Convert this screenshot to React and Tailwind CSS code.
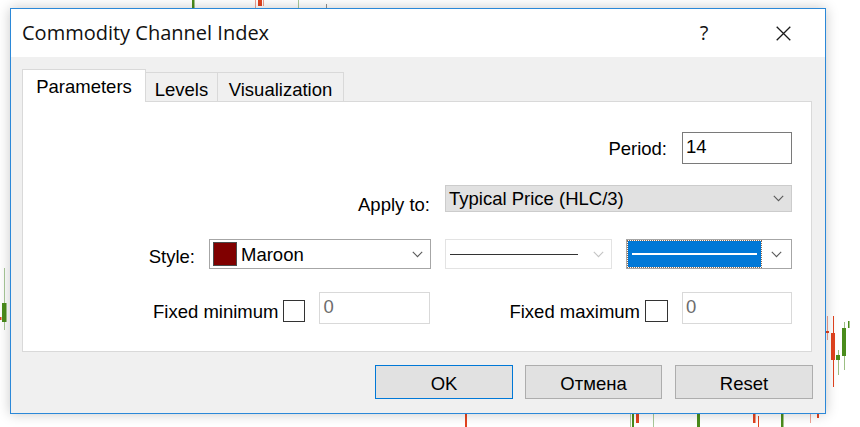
import React from "react";

function Chevron({ color = "#5a5a5a" }) {
  return (
    <svg width="11" height="7" viewBox="0 0 11 7">
      <path d="M0.8 0.8 L5.5 5.6 L10.2 0.8" fill="none" stroke={color} strokeWidth="1.1" />
    </svg>
  );
}

function Chart() {
  const red = "#e2431f";
  const green = "#4a8c1c";
  return (
    <svg className="absolute inset-0" width="860" height="427" viewBox="0 0 860 427">
      {/* top */}
      <rect x="192" y="0" width="2.5" height="9" fill={green} />
      <rect x="255" y="0" width="1" height="9" fill="#f0a090" />
      <rect x="258" y="0" width="4" height="6" fill={red} />
      <rect x="263" y="0" width="1" height="6" fill="#f0a090" />
      <rect x="298" y="0" width="1" height="8" fill="#a8c898" />
      <rect x="326" y="4" width="1" height="4" fill="#909090" />
      {/* left */}
      <rect x="4" y="268" width="1" height="62" fill="#a8c898" />
      <rect x="2" y="303" width="4.5" height="19" fill={green} />
      <rect x="0" y="317" width="1.5" height="3" fill={red} />
      {/* right */}
      <rect x="827" y="316" width="1" height="24" fill="#f0a090" />
      <rect x="826" y="331" width="3" height="2" fill={red} />
      <rect x="833" y="316" width="1" height="71" fill={red} />
      <rect x="831" y="333" width="4" height="27" fill={red} />
      <rect x="838" y="350" width="1" height="25" fill="#9cbf84" />
      <rect x="836" y="355" width="4" height="5" fill={green} />
      <rect x="844" y="322" width="1" height="48" fill="#9cbf84" />
      <rect x="842" y="328" width="4" height="28" fill={green} />
      <rect x="848" y="321" width="1.5" height="7" fill={green} />
      {/* bottom */}
      <rect x="465" y="414" width="2" height="13" fill={red} />
      <rect x="630" y="413" width="1" height="14" fill="#a8c898" />
      <rect x="632" y="413" width="2" height="14" fill={green} />
      <rect x="636" y="413" width="3" height="10" fill={red} />
      <rect x="653" y="413" width="1" height="14" fill="#a8c898" />
      <rect x="697" y="413" width="3" height="14" fill={green} />
      <rect x="753" y="413" width="2.5" height="10" fill={red} />
      <rect x="758" y="416" width="1" height="11" fill={red} />
      <rect x="781" y="413" width="2.5" height="14" fill={green} />
      <rect x="810" y="414" width="1" height="9" fill="#f0a090" />
      <rect x="817" y="414" width="2" height="4" fill={red} />
    </svg>
  );
}

export default function App() {
  return (
    <div className="relative w-[860px] h-[427px] bg-white overflow-hidden font-['Liberation_Sans',Arial,sans-serif] text-black text-[18.5px] leading-[21px]">
      <Chart />
      <div className="absolute left-[10px] top-[8px] w-[816px] h-[406px] border border-[#2b88d8] bg-[#f0f0f0] flex flex-col shadow-[0_0_12px_rgba(0,0,0,0.22)]">
        {/* title bar */}
        <div className="h-[48px] bg-white flex items-center pl-[11px] font-['Open_Sans',sans-serif] text-[20px] leading-[26px] text-[#111]">
          <span className="flex-1">Commodity Channel Index</span>
          <div className="w-[46px] flex justify-center">?</div>
          <div className="w-[33px]" />
          <div className="w-[46px] flex justify-center">
            <svg width="15" height="15" viewBox="0 0 15 15">
              <path d="M0.7 0.7 L14.3 14.3 M14.3 0.7 L0.7 14.3" stroke="#1a1a1a" strokeWidth="1.3" />
            </svg>
          </div>
          <div className="w-[19px]" />
        </div>

        {/* body */}
        <div className="flex-1 flex flex-col pt-[12px] pl-[11px] pr-[12px]">
          {/* tabs */}
          <div className="h-[32px] flex items-end">
            <div className="relative z-10 w-[124px] h-[33px] -mb-[1px] bg-white border border-b-0 border-[#d9d9d9] flex justify-center pt-[6px]">
              Parameters
            </div>
            <div className="w-[72px] h-[29px] border-t border-r border-[#d9d9d9] flex justify-center pt-[6px]">
              Levels
            </div>
            <div className="w-[126px] h-[29px] border-t border-r border-[#d9d9d9] flex justify-center pt-[6px]">
              Visualization
            </div>
          </div>

          {/* panel */}
          <div className="w-[790px] h-[251px] bg-white border border-[#d9d9d9] flex flex-col pt-[30px] pr-[19px]">
            {/* Period */}
            <div className="h-[32px] flex justify-end items-start">
              <span className="mt-[6px] mr-[15px]">Period:</span>
              <div className="w-[110px] h-[32px] border border-[#7a7a7a] pl-[3px] pt-[3px]">14</div>
            </div>

            {/* Apply to */}
            <div className="h-[27px] flex justify-end items-start mt-[21px]">
              <span className="mt-[9px] mr-[15px]">Apply to:</span>
              <div className="w-[347px] h-[27px] border border-[#cccccc] bg-[#e1e1e1] flex items-center pl-[3px]">
                <span className="flex-1">Typical Price (HLC/3)</span>
                <div className="w-[26px] flex justify-center">
                  <Chevron />
                </div>
              </div>
            </div>

            {/* Style */}
            <div className="h-[30px] flex justify-end items-start mt-[27px]">
              <span className="mt-[7px] mr-[14px]">Style:</span>
              <div className="w-[222px] h-[30px] border border-[#a6a6a6] bg-white flex items-center pl-[3px]">
                <div className="w-[24px] h-[24px] bg-[#800000] border border-[#4a4a4a]" />
                <span className="flex-1 ml-[4px]">Maroon</span>
                <div className="w-[26px] flex justify-center">
                  <Chevron />
                </div>
              </div>
              <div className="w-[167px] h-[30px] ml-[14px] border border-[#e3e3e3] bg-white flex items-center pl-[4px]">
                <div className="flex-1 flex items-center pr-[8px]">
                  <div className="w-[128px] h-[1px] bg-[#333]" />
                </div>
                <div className="w-[26px] flex justify-center">
                  <Chevron color="#c4c4c4" />
                </div>
              </div>
              <div className="w-[166px] h-[30px] ml-[14px] border border-[#a6a6a6] bg-white flex items-center pl-[1px]">
                <div className="w-[133px] h-[26px] bg-[#0078d7] outline outline-1 outline-dotted outline-[#8a6a50] flex items-center px-[4px]">
                  <div className="w-full h-[2px] bg-white" />
                </div>
                <div className="flex-1 flex justify-center">
                  <Chevron />
                </div>
              </div>
            </div>

            {/* Fixed min/max */}
            <div className="h-[32px] flex justify-end items-start mt-[23px]">
              <span className="mt-[9px] mr-[5px]">Fixed minimum</span>
              <div className="w-[22px] h-[22px] mt-[8px] border-[1.5px] border-[#333] bg-white" />
              <div className="w-[111px] h-[32px] ml-[14px] border border-[#d9d9d9] pl-[3px] pt-[3px] text-[#6d6d6d]">0</div>
              <span className="mt-[9px] ml-[79px] mr-[5px]">Fixed maximum</span>
              <div className="w-[23px] h-[22px] mt-[8px] border-[1.5px] border-[#333] bg-white" />
              <div className="w-[110px] h-[32px] ml-[14px] border border-[#d9d9d9] pl-[3px] pt-[3px] text-[#6d6d6d]">0</div>
            </div>
          </div>

          {/* buttons */}
          <div className="flex justify-end mt-[13px]">
            <div className="w-[138px] h-[34px] border border-[#0078d7] bg-[#e1e1e1] flex items-center justify-center pt-[2px]">OK</div>
            <div className="w-[137px] h-[34px] ml-[12px] border border-[#adadad] bg-[#e1e1e1] flex items-center justify-center pt-[2px]">Отмена</div>
            <div className="w-[138px] h-[34px] ml-[13px] border border-[#adadad] bg-[#e1e1e1] flex items-center justify-center pt-[2px]">Reset</div>
          </div>
        </div>
      </div>
    </div>
  );
}
